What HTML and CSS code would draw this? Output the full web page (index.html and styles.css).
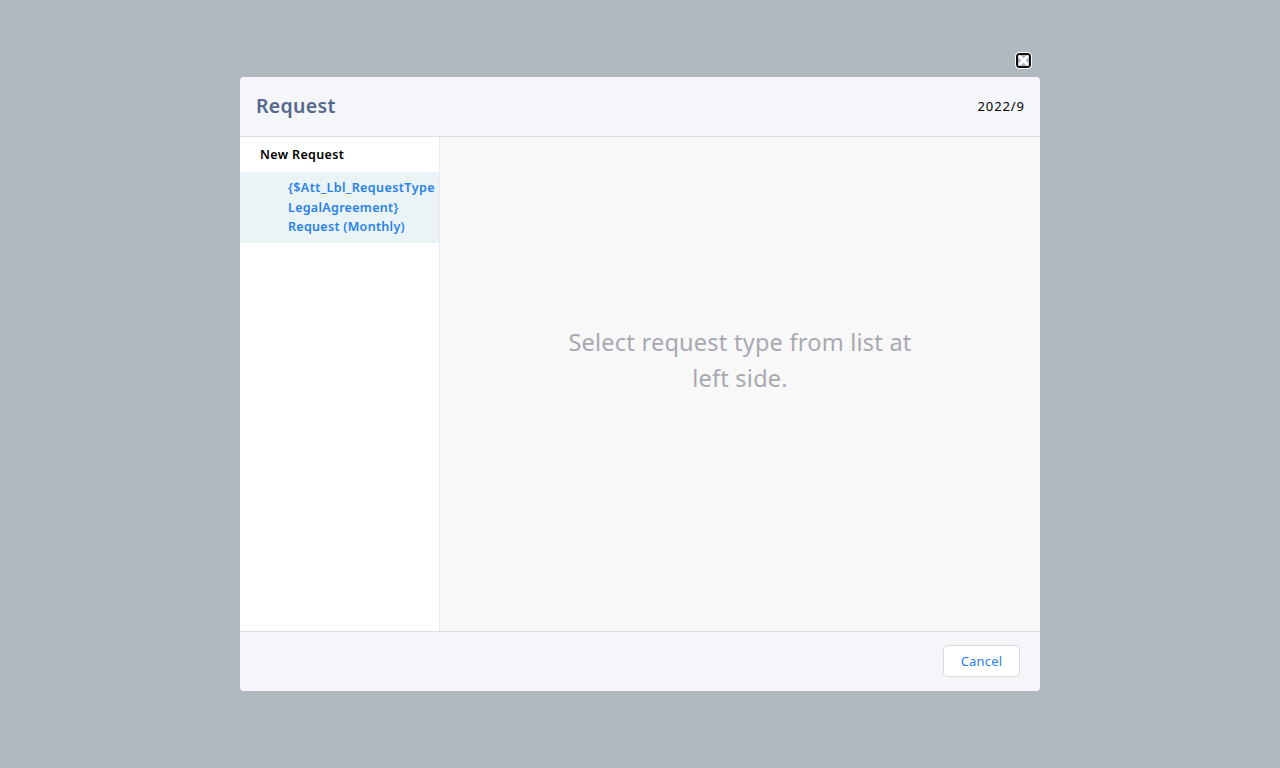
FILE: index.html
```html
<!DOCTYPE html>
<html lang="en">
<head>
<meta charset="utf-8">
<title>Request</title>
<link rel="stylesheet" href="styles.css">
</head>
<body>
<div class="backdrop">
  <section class="modal" role="dialog" aria-labelledby="title">
    <button class="close" aria-label="Close">
      <svg viewBox="0 0 11 11" width="11" height="11"><path d="M1.8 1.8 9.2 9.2M9.2 1.8 1.8 9.2"/></svg>
    </button>
    <header class="header">
      <h1 class="title" id="title">Request</h1>
      <span class="date">2022/9</span>
    </header>
    <div class="body">
      <nav class="sidebar">
        <h2 class="group">New Request</h2>
        <a class="item"><span class="long">{$Att_Lbl_RequestType</span><br>LegalAgreement}<br>Request (Monthly)</a>
      </nav>
      <main class="content">
        <p class="message">Select request type from list at<br>left side.</p>
      </main>
    </div>
    <footer class="footer">
      <button class="cancel">Cancel</button>
    </footer>
  </section>
</div>
</body>
</html>
```
FILE: styles.css
```css
* { box-sizing: border-box; }
body {
  margin: 0;
  font: 13px/19.5px "Noto Sans", sans-serif;
  color: #000;
}
.backdrop {
  display: flex;
  justify-content: center;
  align-items: center;
  height: 768px;
  background: #b0b8c0;
}
.modal {
  position: relative;
  display: flex;
  flex-direction: column;
  width: 800px;
  height: 614px;
}
.close {
  position: absolute;
  top: -24px;
  right: 9px;
  width: 15px;
  height: 15px;
  padding: 0;
  border: 2px solid #101010;
  border-radius: 3px;
  outline: 1px solid #fff;
  background: #b0b8c0;
}
.close svg { display: block; fill: none; stroke: #fff; stroke-width: 3; stroke-linecap: round; }
.header {
  display: flex;
  align-items: center;
  justify-content: space-between;
  height: 60px;
  padding: 0 16px;
  background: #f4f6fa;
  border-bottom: 1px solid #d8dde6;
  border-radius: 4px 4px 0 0;
}
.title {
  margin: 0;
  padding-bottom: 2px;
  font-size: 19.5px;
  line-height: 25px;
  font-weight: 600;
  letter-spacing: .3px;
  color: #54698d;
}
.date { letter-spacing: .9px; margin-right: -.9px; }
.body { display: flex; flex: 1; min-height: 0; }
.sidebar {
  width: 200px;
  background: #fff;
  border-right: 1px solid #ebebeb;
}
.group {
  margin: 0;
  padding: 8px 20px 7px;
  height: 35px;
  font-size: 12.5px;
  line-height: 20px;
  font-weight: 600;
  letter-spacing: .35px;
}
.item {
  display: block;
  height: 71px;
  padding: 6px 0 6px 48px;
  background: #eaf3f6;
  color: #2782ed;
  font-size: 12.5px;
  font-weight: 600;
  letter-spacing: .3px;
  white-space: nowrap;
}
.long { letter-spacing: .43px; }
.content {
  flex: 1;
  display: flex;
  align-items: center;
  justify-content: center;
  padding-bottom: 48px;
  background: #f8f8f8;
}
.message {
  margin: 0;
  font-size: 23.5px;
  line-height: 36px;
  letter-spacing: .24px;
  text-align: center;
  color: #a8a9b1;
}
.footer {
  display: flex;
  align-items: center;
  justify-content: flex-end;
  height: 60px;
  padding: 0 20px 2px;
  background: #f4f6fa;
  border-top: 1px solid #d8dde6;
  border-radius: 0 0 4px 4px;
}
.cancel {
  width: 77px;
  height: 32px;
  padding: 0;
  border: 1px solid #dddbda;
  border-radius: 4px;
  background: #fff;
  color: #2782ed;
  font: 13px/30px "Noto Sans", sans-serif;
  letter-spacing: .2px;
}
```
